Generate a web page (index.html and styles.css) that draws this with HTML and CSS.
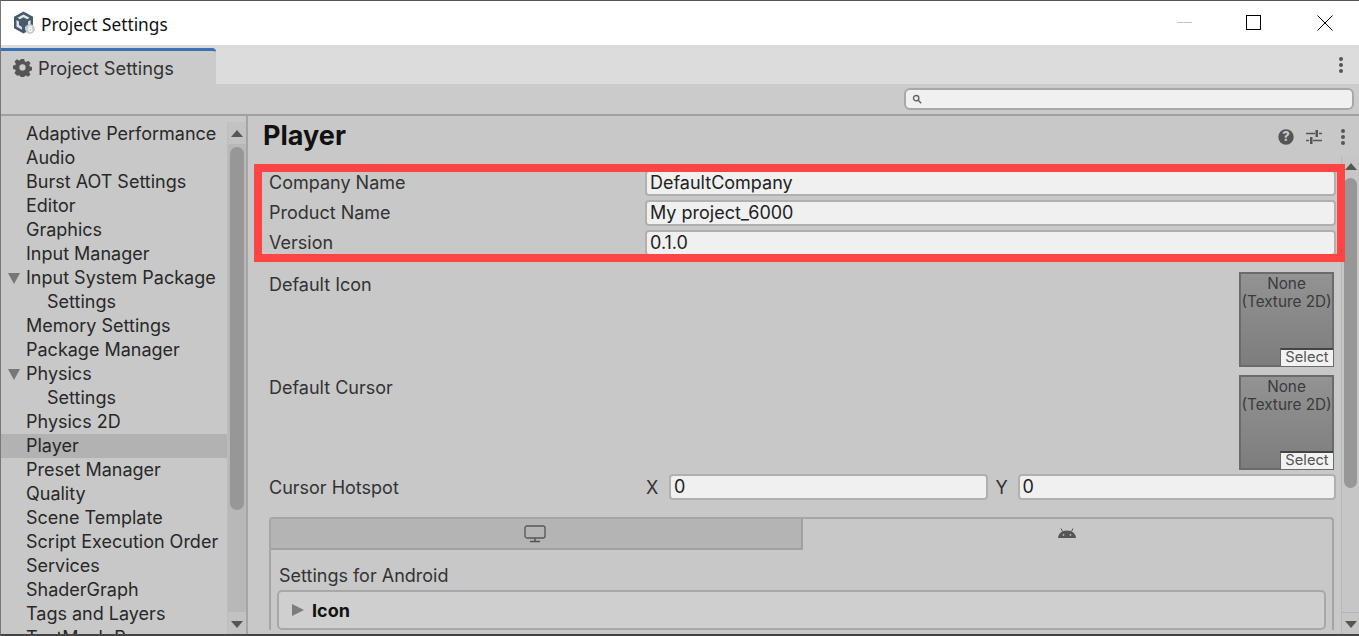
FILE: index.html
```html
<!DOCTYPE html>
<html lang="en">
<head>
<meta charset="utf-8">
<title>Project Settings</title>
<link rel="stylesheet" href="styles.css">
</head>
<body>
<div class="window">
  <header class="titlebar">
    <svg class="app-icon" viewBox="0 0 22 24" width="22" height="24">
      <path d="M10.500 0.500l9.500 5.300v11.400l-9.500 5.300-9.500-5.300V5.800z" fill="#465a6c"/>
      <path d="M10.500 3.500l6 3.300-2.400 1.400-3.600-2-3.600 2-2.400-1.400zM3.500 9l2.400 1.400v3.700l3 1.800v2.800l-5.400-3.100zM17.500 9v6.600l-5.400 3.100v-2.800l3-1.800v-3.700z" fill="#e3e8ec"/>
      <circle cx="17" cy="18" r="4.800" fill="#c4c9ce"/>
      <text x="15" y="21" class="app-six">6</text>
    </svg>
    <span class="title-text">Project Settings</span>
    <div class="win-controls">
      <svg class="win-btn min" viewBox="0 0 16 16" width="16" height="16"><path d="M0 7.500h15" stroke="#c4c4c4" fill="none"/></svg>
      <svg class="win-btn" viewBox="0 0 16 16" width="16" height="16"><rect x="0.500" y="0.500" width="14" height="14" stroke="#000" fill="none"/></svg>
      <svg class="win-btn" viewBox="0 0 16 16" width="16" height="16"><path d="M0.500 0.500l15 15M15.500 0.500l-15 15" stroke="#000" fill="none"/></svg>
    </div>
  </header>

  <div class="tabstrip">
    <div class="tab">
      <svg viewBox="0 0 20 20" width="19" height="19"><path fill="#555" fill-rule="evenodd" d="M8.200 1h3.600l.5 2.500 1.500.7 2.200-1.400 2.500 2.500-1.400 2.200.6 1.500 2.500.5v3.600l-2.500.5-.7 1.500 1.400 2.200-2.500 2.500-2.200-1.400-1.500.6-.5 2.500H8.200l-.5-2.500-1.500-.7L4 18.300 1.500 15.800l1.400-2.200-.6-1.500L-.2 11.600V8l2.500-.5.700-1.500L1.600 3.800 4.100 1.300l2.200 1.400 1.400-.6zM10 6.600a3.300 3.300 0 1 0 0 6.600 3.300 3.300 0 0 0 0-6.600z"/></svg>
      <span>Project Settings</span>
    </div>
    <div class="menu-dots"><i></i><i></i><i></i></div>
  </div>

  <div class="toolbar">
    <div class="search">
      <svg viewBox="0 0 12 12" width="10" height="10"><circle cx="5" cy="5" r="3.200" fill="none" stroke="#666" stroke-width="1.800"/><path d="M7.500 7.500l3.500 3.500" stroke="#666" stroke-width="1.800"/></svg>
    </div>
  </div>

  <div class="main">
    <nav class="sidebar">
      <div class="tree">
        <div class="item">Adaptive Performance</div>
        <div class="item">Audio</div>
        <div class="item">Burst AOT Settings</div>
        <div class="item">Editor</div>
        <div class="item">Graphics</div>
        <div class="item">Input Manager</div>
        <div class="item open">Input System Package</div>
        <div class="item sub">Settings</div>
        <div class="item">Memory Settings</div>
        <div class="item">Package Manager</div>
        <div class="item open">Physics</div>
        <div class="item sub">Settings</div>
        <div class="item">Physics 2D</div>
        <div class="item selected">Player</div>
        <div class="item">Preset Manager</div>
        <div class="item">Quality</div>
        <div class="item">Scene Template</div>
        <div class="item">Script Execution Order</div>
        <div class="item">Services</div>
        <div class="item">ShaderGraph</div>
        <div class="item">Tags and Layers</div>
        <div class="item">TextMesh Pro</div>
      </div>
      <div class="scroll-wrap">
        <div class="scrollbar side-scroll">
          <div class="arrow up"></div>
          <div class="track"><div class="thumb"></div></div>
          <div class="arrow down"></div>
        </div>
      </div>
    </nav>

    <section class="content">
      <div class="player-head">
        <h1>Player</h1>
        <div class="head-icons">
          <svg viewBox="0 0 16 16" width="16" height="16"><circle cx="8" cy="8" r="7.700" fill="#555"/><text x="8" y="12.300" class="help-q">?</text></svg>
          <svg viewBox="0 0 16 16" width="16" height="16"><path d="M0 4.500h9M13 4.500h3M0 11.500h3M7 11.500h9" stroke="#555" stroke-width="1.500" fill="none"/><path d="M9.500 1h2.500v7H9.500zM4 8h2.500v7H4z" fill="#555"/></svg>
          <div class="menu-dots"><i></i><i></i><i></i></div>
        </div>
      </div>

      <div class="inspector">
        <div class="fields">
          <div class="row"><span class="label">Company Name</span><div class="input">DefaultCompany</div></div>
          <div class="row"><span class="label">Product Name</span><div class="input">My project_6000</div></div>
          <div class="row"><span class="label">Version</span><div class="input">0.1.0</div></div>

          <div class="tex-row first">
            <span class="label">Default Icon</span>
            <div class="tex"><div class="tex-name">None<br>(Texture 2D)</div><div class="tex-select">Select</div></div>
          </div>
          <div class="tex-row">
            <span class="label">Default Cursor</span>
            <div class="tex"><div class="tex-name">None<br>(Texture 2D)</div><div class="tex-select">Select</div></div>
          </div>

          <div class="hotspot">
            <span class="label">Cursor Hotspot</span>
            <span class="axis">X</span><div class="input small">0</div>
            <span class="axis y">Y</span><div class="input small">0</div>
          </div>

          <div class="platforms">
            <div class="platform-tabs">
              <div class="ptab inactive">
                <svg viewBox="0 0 22 18" width="22" height="18"><rect x="1" y="1" width="20" height="12" rx="2" fill="none" stroke="#555" stroke-width="1.300"/><path d="M11 13v3M6 16.500h10" stroke="#555" stroke-width="1.500"/></svg>
              </div>
              <div class="ptab active">
                <svg viewBox="0 0 18 12" width="18" height="12"><path d="M0 11C.4 6.800 3.500 3.500 9 3.500S17.600 6.800 18 11z" fill="#555"/><path d="M4.500 4.500L3 1.500M13.500 4.500L15 1.500" stroke="#555"/><circle cx="5.500" cy="7.800" r=".9" fill="#c8c8c8"/><circle cx="12.500" cy="7.800" r=".9" fill="#c8c8c8"/></svg>
              </div>
            </div>
            <div class="platform-body">
              <div class="settings-for">Settings for Android</div>
              <div class="foldout"><span class="fold-arrow"></span><b>Icon</b></div>
            </div>
          </div>
        </div>
        <div class="scrollbar main-scroll">
          <div class="arrow up"></div>
          <div class="track"><div class="thumb"></div></div>
          <div class="arrow down"></div>
        </div>
      </div>
      <div class="highlight"></div>
    </section>
  </div>
</div>
</body>
</html>
```

FILE: styles.css
```css
* { box-sizing: border-box; }
html, body { margin: 0; height: 100%; overflow: hidden; }
body { font-family: Inter, "Liberation Sans", sans-serif; font-size: 18px; color: #222; background: #fff; }

.window {
  width: 1359px; height: 636px;
  display: flex; flex-direction: column;
  border-top: 1px solid #555;
  border-left: 1px solid #777;
  border-bottom: 2px solid #444;
  overflow: hidden;
}

.titlebar { height: 44px; flex: none; display: flex; align-items: center; background: #fff; padding-left: 12px; }
.app-icon { margin-top: -1px; }
.app-six { font-size: 7px; font-weight: 700; fill: #fff; font-family: Inter, sans-serif; }
.title-text { margin-left: 6px; font-family: "Noto Sans", "Open Sans", sans-serif; font-size: 17.300px; color: #111; margin-top: 3px; }
.win-controls { margin-left: auto; display: flex; gap: 55px; padding-right: 26px; margin-top: -1px; }
.win-btn.min { margin-right: -2px; }

.tabstrip { height: 39px; flex: none; display: flex; align-items: flex-end; background: #dcdcdc; padding-right: 16px; }
.tab {
  width: 215px; height: 36px;
  background: #cbcbcb;
  border-top: 3px solid #3a72b5;
  border-top-right-radius: 4px;
  display: flex; align-items: center; gap: 6px;
  padding: 0 0 0 12px;
  font-size: 18.300px;
  color: #333;
}
.menu-dots { display: flex; flex-direction: column; gap: 2px; align-items: center; width: 4px; }
.menu-dots i { width: 4px; height: 4px; border-radius: 50%; background: #555; }
.tabstrip .menu-dots { margin-left: auto; align-self: center; }

.toolbar { height: 30px; flex: none; background: #cbcbcb; display: flex; justify-content: flex-end; align-items: center; padding-right: 5px; }
.search {
  width: 450px; height: 22px;
  background: #f0f0f0; border: 2px solid #a8a8a8; border-radius: 6px;
  display: flex; align-items: center; padding-left: 6px;
}

.main { flex: 1; min-height: 0; display: flex; border-top: 2px solid #a0a0a0; }

.sidebar { flex: none; width: 247px; display: flex; background: #c8c8c8; border-right: 2px solid #a5a5a5; }
.tree { flex: 1; min-width: 0; padding-top: 6px; overflow: hidden; }
.item { height: 24px; line-height: 24px; padding-left: 25px; white-space: nowrap; position: relative; color: #282828; }
.item.sub { padding-left: 46px; }
.item.selected { background: #b2b2b2; }
.item.open::before {
  content: ""; position: absolute; left: 7px; top: 7px;
  border-left: 6.500px solid transparent; border-right: 6.500px solid transparent; border-top: 11px solid #777;
}

.scroll-wrap { flex: none; width: 19px; padding-top: 6px; display: flex; }
.scrollbar { flex: none; display: flex; flex-direction: column; }
.side-scroll { width: 19px; background: #b8b8b8; border-left: 1px solid #bdbdbd; }
.arrow { height: 22px; flex: none; display: flex; align-items: center; justify-content: center; background: #c2c2c2; }
.arrow::before { content: ""; border-left: 6px solid transparent; border-right: 6px solid transparent; }
.arrow.up::before { border-bottom: 7px solid #575750; }
.arrow.down::before { border-top: 7px solid #575750; margin-top: 2px; }
.track { flex: 1; min-height: 0; padding: 3px 2px 0; }
.thumb { background: #979797; border-radius: 8px; width: 100%; }
.side-scroll .thumb { height: 363px; }

.content { flex: 1; min-width: 0; display: flex; flex-direction: column; background: #c8c8c8; position: relative; }
.player-head { height: 40px; flex: none; display: flex; align-items: center; padding: 0 14px 0 15px; }
.player-head h1 { margin: 0; font-size: 27px; font-weight: 700; color: #111; line-height: 40px; }
.head-icons { margin-left: auto; display: flex; align-items: center; gap: 12px; padding-top: 2px; }
.head-icons .menu-dots { margin-left: 7px; }

.inspector { flex: 1; min-height: 0; display: flex; }
.fields { flex: 1; min-width: 0; padding: 12px 5px 0 21px; overflow: hidden; }
.main-scroll { width: 18px; background: #c6c6c6; border-left: 1px solid #b8b8b8; }
.main-scroll .arrow { background: #c6c6c6; }
.main-scroll .arrow.up { padding-bottom: 2px; }
.main-scroll .arrow.down { border-top: 1px solid #b4b4b4; }
.main-scroll .track { padding-top: 0; }
.main-scroll .thumb { height: 310px; }

.label { color: #333; }
.row { height: 30px; display: flex; align-items: center; }
.row .label { width: 376px; flex: none; padding-bottom: 1px; }
.input {
  height: 25px; background: #f0f0f0; border: 2px solid #b0b0b0; border-radius: 4px;
  padding-left: 3px; line-height: 21px; color: #222; flex: 1; min-width: 0;
}
.row .input { height: 26px; }

.tex-row { display: flex; justify-content: space-between; height: 95px; margin-bottom: 8px; }
.tex-row.first { margin-top: 14px; }
.tex-row .label { line-height: 24px; padding-top: 1px; }
.tex {
  width: 95px; height: 95px; margin-right: 2px; position: relative;
  background: linear-gradient(#939393 0%, #7d7d7d 100%);
  border: 2px solid #6b6b6b;
  font-size: 15.300px; line-height: 18px; color: #3a3a3a; text-align: center;
  padding-top: 1px;
}
.tex-name { white-space: nowrap; margin: 0 -2px; }
.tex-select {
  position: absolute; right: -1px; bottom: -1px; width: 53px; height: 18px;
  background: #f2f2f2; border-top: 2px solid #444; border-left: 1px solid #666; color: #555;
  font-size: 14.700px; line-height: 15px;
}

.hotspot { display: flex; align-items: center; height: 26px; margin-top: -4px; }
.hotspot .label { width: 376px; flex: none; }
.axis { width: 24px; flex: none; padding-left: 1px; color: #333; }
.axis.y { width: 30px; padding-left: 8px; }
.input.small { height: 26px; flex: 1; }

.platforms { margin: 17px 2px 0 0; border: 2px solid #a5a5a5; border-bottom: 0; border-radius: 4px 4px 0 0; }
.platform-tabs { display: flex; height: 31px; }
.ptab { flex: 1; display: flex; justify-content: center; align-items: center; padding: 0 2px 2px 0; }
.ptab.active { padding-bottom: 4px; }
.ptab.inactive { background: #b4b4b4; border-bottom: 2px solid #a0a0a0; border-right: 2px solid #a0a0a0; flex: none; width: 532px; padding-bottom: 0; }
.platform-body { padding: 14px 6px 0 6px; }
.settings-for { color: #333; line-height: 24px; padding-left: 2px; }
.foldout {
  height: 40px; margin-top: 2px; background: #cfcfcf; border: 2px solid #a8a8a8; border-radius: 5px;
  display: flex; align-items: center; padding-left: 13px; gap: 8px; color: #111;
}
.fold-arrow { width: 0; height: 0; border-top: 6px solid transparent; border-bottom: 6px solid transparent; border-left: 12px solid #7c7c7c; }

.highlight {
  position: absolute; left: 6px; top: 48px; width: 1091px; height: 98px;
  border: 8px solid #ff4444; pointer-events: none;
}
.help-q { font-size: 13px; font-weight: 800; fill: #c8c8c8; text-anchor: middle; font-family: Inter, sans-serif; }
```
